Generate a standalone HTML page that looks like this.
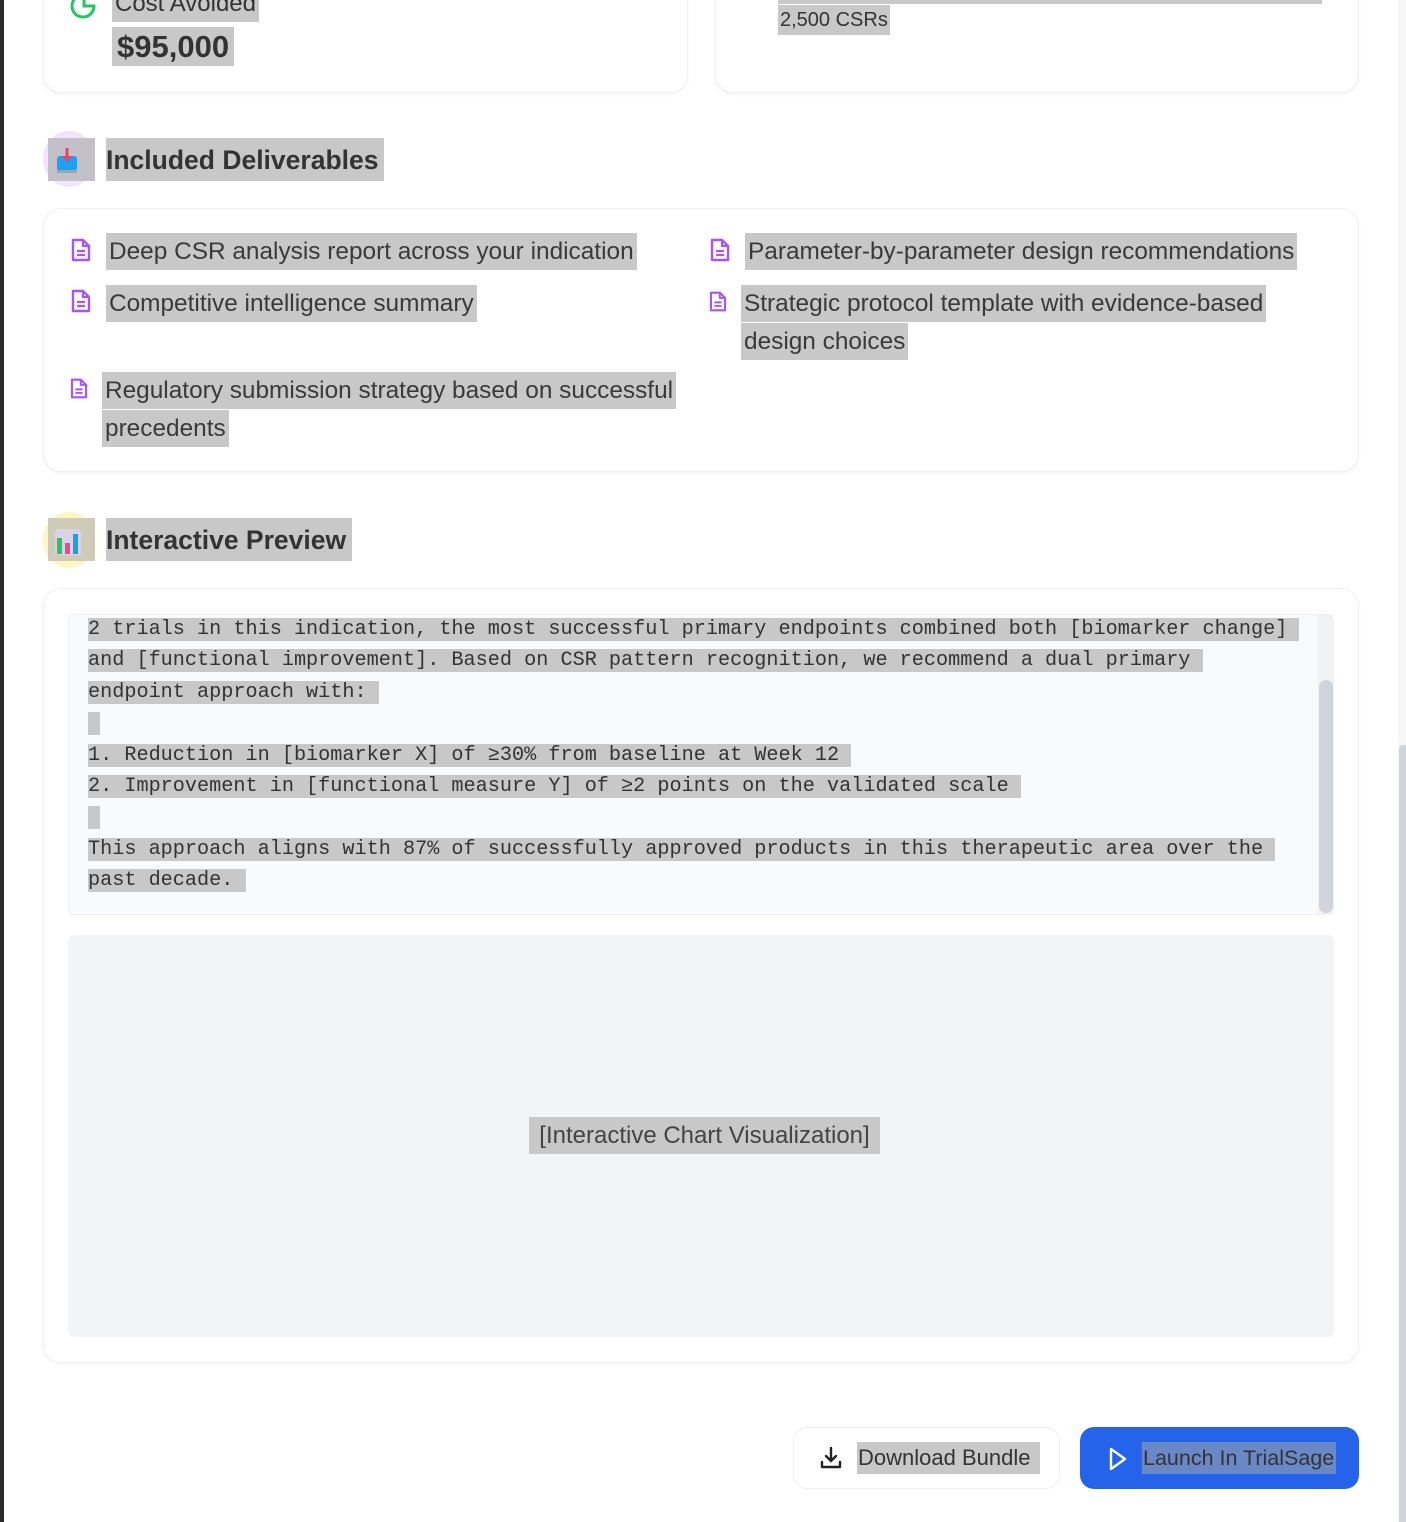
<!DOCTYPE html>
<html><head><meta charset="utf-8">
<style>
*{margin:0;padding:0;box-sizing:border-box}
html,body{width:1406px;height:1522px;overflow:hidden;background:#fff}
body{position:relative;font-family:"Liberation Sans",sans-serif;color:#333}
.a{position:absolute;white-space:nowrap}
.hl{background:#c8c8c8;padding:5px 3px;-webkit-box-decoration-break:clone;box-decoration-break:clone}
.card{position:absolute;background:#fff;border:1px solid #eef0f3;border-radius:18px;box-shadow:0 2px 4px rgba(0,0,0,0.04)}
.item{position:absolute;font-size:24.4px;line-height:37.5px;color:#3a3a3a}
.ic{position:absolute}
.mono{font-family:"Liberation Mono",monospace;font-size:20.2px;line-height:31.4px;color:#333;white-space:pre}
</style></head><body>
<div class="a" style="left:0;top:0;width:4px;height:1522px;background:#2b2b2b"></div>
<div class="a" style="left:1398px;top:0;width:8px;height:1522px;background:#f6f6f7"></div>
<div class="a" style="left:1399px;top:745px;width:7px;height:777px;background:#d1d5db;border-radius:4px 0 0 0"></div>

<div class="card" style="left:43px;top:-30px;width:645px;height:123px"></div>
<div class="card" style="left:715px;top:-30px;width:644px;height:123px"></div>

<svg class="ic" style="left:67px;top:-10px" width="32" height="32" viewBox="0 0 32 32"><path d="M27 16a11 11 0 1 1-11-11" fill="none" stroke="#22c55e" stroke-width="3" stroke-linecap="round"/><path d="M17 5v11h11" fill="none" stroke="#22c55e" stroke-width="3"/></svg>
<div class="a" style="left:112px;top:-12px;font-size:24px;line-height:32px"><span class="hl">Cost Avoided</span></div>
<div class="a" style="left:112px;top:28px;font-size:31px;line-height:38px;font-weight:bold"><span class="hl" style="padding:2px 5px">$95,000</span></div>
<div class="a" style="left:778px;top:0;width:544px;height:4px;background:#c8c8c8"></div>
<div class="a" style="left:778px;top:5px;font-size:20px;line-height:30px"><span class="hl" style="padding:4px 2px">2,500 CSRs</span></div>

<div class="a" style="left:43px;top:131px;width:52px;height:56px;border-radius:50%;background:#efe6fb"></div>
<div class="a" style="left:48px;top:138px;width:47px;height:43px;background:#c4c0c8"></div>
<svg class="ic" style="left:55px;top:146px" width="26" height="30" viewBox="0 0 26 30"><rect x="2" y="10" width="20" height="15" rx="3" fill="#1da1f2"/><rect x="2" y="24" width="20" height="3" fill="#9aa"/><path d="M12 2v12" stroke="#f43f5e" stroke-width="3"/><path d="M7 10l5 6 5-6z" fill="#f43f5e"/></svg>
<div class="a" style="left:106px;top:138px;height:43px;font-size:26.5px;line-height:45px;background:#c8c8c8;padding:0 6px 0 0;font-weight:bold;overflow:hidden">Included Deliverables</div>

<div class="card" style="left:43px;top:208px;width:1316px;height:264px"></div>

<svg class="ic" style="left:70px;top:237px" width="22" height="26" viewBox="0 0 22 26"><path d="M3 3h10l6 6v14H3z" fill="none" stroke="#a855f7" stroke-width="2.4" stroke-linejoin="round"/><path d="M13 3v6h6M7 14h8M7 18h8" stroke="#a855f7" stroke-width="2.2" fill="none"/></svg>
<div class="item a" style="left:106px;top:233px"><span class="hl">Deep CSR analysis report across your indication</span></div>
<svg class="ic" style="left:70px;top:288px" width="22" height="26" viewBox="0 0 22 26"><path d="M3 3h10l6 6v14H3z" fill="none" stroke="#a855f7" stroke-width="2.4" stroke-linejoin="round"/><path d="M13 3v6h6M7 14h8M7 18h8" stroke="#a855f7" stroke-width="2.2" fill="none"/></svg>
<div class="item a" style="left:106px;top:285px"><span class="hl">Competitive intelligence summary</span></div>
<svg class="ic" style="left:69px;top:377px" width="20" height="23" viewBox="0 0 22 26"><path d="M3 3h10l6 6v14H3z" fill="none" stroke="#a855f7" stroke-width="2.4" stroke-linejoin="round"/><path d="M13 3v6h6M7 14h8M7 18h8" stroke="#a855f7" stroke-width="2.2" fill="none"/></svg>
<div class="item" style="left:102px;top:372px;width:600px"><span class="hl">Regulatory submission strategy based on successful precedents</span></div>

<svg class="ic" style="left:709px;top:237px" width="22" height="26" viewBox="0 0 22 26"><path d="M3 3h10l6 6v14H3z" fill="none" stroke="#a855f7" stroke-width="2.4" stroke-linejoin="round"/><path d="M13 3v6h6M7 14h8M7 18h8" stroke="#a855f7" stroke-width="2.2" fill="none"/></svg>
<div class="item a" style="left:745px;top:233px"><span class="hl">Parameter-by-parameter design recommendations</span></div>
<svg class="ic" style="left:708px;top:290px" width="20" height="23" viewBox="0 0 22 26"><path d="M3 3h10l6 6v14H3z" fill="none" stroke="#a855f7" stroke-width="2.4" stroke-linejoin="round"/><path d="M13 3v6h6M7 14h8M7 18h8" stroke="#a855f7" stroke-width="2.2" fill="none"/></svg>
<div class="item" style="left:741px;top:285px;width:580px"><span class="hl">Strategic protocol template with evidence-based design choices</span></div>

<div class="a" style="left:43px;top:512px;width:52px;height:56px;border-radius:50%;background:#fdf6c3"></div>
<div class="a" style="left:48px;top:518px;width:47px;height:43px;background:#cfcbb8"></div>
<svg class="ic" style="left:54px;top:528px" width="28" height="28" viewBox="0 0 28 28"><rect x="1" y="1" width="26" height="26" rx="3" fill="#d9d3e6"/><rect x="3" y="10" width="5" height="16" fill="#22c55e"/><rect x="11" y="15" width="5" height="11" fill="#ec4899"/><rect x="19" y="6" width="5" height="20" fill="#0ea5e9"/></svg>
<div class="a" style="left:106px;top:518px;height:43px;font-size:26.5px;line-height:45px;background:#c8c8c8;padding:0 6px 0 0;font-weight:bold;overflow:hidden">Interactive Preview</div>

<div class="card" style="left:43px;top:588px;width:1316px;height:775px"></div>
<div class="a" style="left:68px;top:614px;width:1266px;height:301px;background:#f9fafb;border:1px solid #eef0f3;border-radius:6px"></div>
<div class="a" style="left:1318px;top:615px;width:15px;height:299px;background:#f1f2f4"></div>
<div class="a" style="left:1319px;top:680px;width:14px;height:233px;background:#d1d5db;border-radius:7px"></div>
<div class="a" style="left:88px;top:614px;width:1226px;height:294px;overflow:hidden"><div class="mono"><span style="background:#c8c8c8">2 trials in this indication, the most successful primary endpoints combined both [biomarker change] </span>
<span style="background:#c8c8c8">and [functional improvement]. Based on CSR pattern recognition, we recommend a dual primary </span>
<span style="background:#c8c8c8">endpoint approach with: </span>
<span style="background:#c8c8c8"> </span>
<span style="background:#c8c8c8">1. Reduction in [biomarker X] of ≥30% from baseline at Week 12 </span>
<span style="background:#c8c8c8">2. Improvement in [functional measure Y] of ≥2 points on the validated scale </span>
<span style="background:#c8c8c8"> </span>
<span style="background:#c8c8c8">This approach aligns with 87% of successfully approved products in this therapeutic area over the </span>
<span style="background:#c8c8c8">past decade. </span></div></div>

<div class="a" style="left:68px;top:935px;width:1266px;height:402px;background:#f3f4f6;border-radius:6px"></div>
<div class="a" style="left:529px;top:1117px;width:351px;height:37px;background:#c8c8c8;font-size:24px;line-height:37px;text-align:center;color:#444">[Interactive Chart Visualization]</div>

<div class="a" style="left:793px;top:1427px;width:267px;height:62px;border:1.5px solid #eceef2;border-radius:14px;background:#fff"></div>
<svg class="ic" style="left:818px;top:1445px" width="26" height="26" viewBox="0 0 26 26"><path d="M13 3v13M8 11l5 5 5-5M4 17v5h18v-5" fill="none" stroke="#222" stroke-width="2.4" stroke-linecap="round" stroke-linejoin="round"/></svg>
<div class="a" style="left:857px;top:1442px;width:183px;height:32px;background:#c8c8c8;font-size:22px;line-height:32px;color:#333;padding-left:1px;overflow:hidden">Download Bundle</div>

<div class="a" style="left:1080px;top:1427px;width:279px;height:62px;background:#2563eb;border-radius:14px"></div>
<svg class="ic" style="left:1106px;top:1446px" width="24" height="26" viewBox="0 0 24 26"><path d="M5 3l14 10L5 23z" fill="none" stroke="#fff" stroke-width="2.4" stroke-linejoin="round"/></svg>
<div class="a" style="left:1142px;top:1442px;width:194px;height:32px;background:#6a88c6;font-size:21.5px;line-height:32px;color:#333;padding-left:1px;overflow:hidden">Launch In TrialSage</div>
</body></html>
